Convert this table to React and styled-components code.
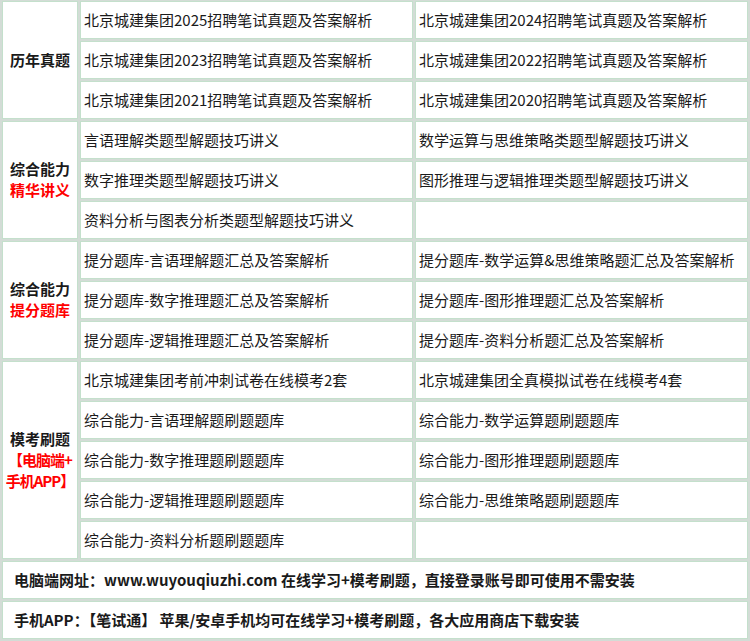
import React from 'react';
import styled, { createGlobalStyle } from 'styled-components';

const GlobalStyle = createGlobalStyle`
  body {
    margin: 0;
    background: #ffffff;
    font-family: "Noto Sans CJK SC", "Liberation Sans", sans-serif;
  }
`;

const Board = styled.div`
  width: 750px;
  box-sizing: border-box;
  display: grid;
  grid-template-columns: 76px 1fr 1fr;
  grid-auto-rows: 38px;
  gap: 2px;
  padding: 1px 2px 2px;
  background: #d3dcd6;
`;

const Cell = styled.div`
  box-sizing: border-box;
  background: #ffffff;
  border: 1px solid #c4e0cc;
  display: flex;
  align-items: center;
  padding: 0 3px 2px;
  font-size: 15px;
  color: #1a1a1a;
  white-space: nowrap;
  overflow: hidden;
`;

const Label = styled(Cell)`
  grid-row: span ${(props) => props.span};
  display: block;
  align-content: center;
  padding: 0 0 2px;
  font-weight: bold;
  text-align: center;
  line-height: 21px;
`;

const Red = styled.span`
  display: block;
  color: #ff0000;
  letter-spacing: ${(props) => (props.tight ? '-1px' : '0')};
`;

const Wide = styled(Cell)`
  grid-column: 1 / -1;
  padding: 0 11px 2px;
  font-weight: bold;
`;

const sections = [
  {
    title: <>历年真题</>,
    items: [
      '北京城建集团2025招聘笔试真题及答案解析',
      '北京城建集团2024招聘笔试真题及答案解析',
      '北京城建集团2023招聘笔试真题及答案解析',
      '北京城建集团2022招聘笔试真题及答案解析',
      '北京城建集团2021招聘笔试真题及答案解析',
      '北京城建集团2020招聘笔试真题及答案解析',
    ],
  },
  {
    title: (
      <>
        综合能力
        <Red>精华讲义</Red>
      </>
    ),
    items: [
      '言语理解类题型解题技巧讲义',
      '数学运算与思维策略类题型解题技巧讲义',
      '数字推理类题型解题技巧讲义',
      '图形推理与逻辑推理类题型解题技巧讲义',
      '资料分析与图表分析类题型解题技巧讲义',
      '',
    ],
  },
  {
    title: (
      <>
        综合能力
        <Red>提分题库</Red>
      </>
    ),
    items: [
      '提分题库-言语理解题汇总及答案解析',
      '提分题库-数学运算&思维策略题汇总及答案解析',
      '提分题库-数字推理题汇总及答案解析',
      '提分题库-图形推理题汇总及答案解析',
      '提分题库-逻辑推理题汇总及答案解析',
      '提分题库-资料分析题汇总及答案解析',
    ],
  },
  {
    title: (
      <>
        模考刷题
        <Red tight>【电脑端+</Red>
        <Red tight>手机APP】</Red>
      </>
    ),
    items: [
      '北京城建集团考前冲刺试卷在线模考2套',
      '北京城建集团全真模拟试卷在线模考4套',
      '综合能力-言语理解题刷题题库',
      '综合能力-数学运算题刷题题库',
      '综合能力-数字推理题刷题题库',
      '综合能力-图形推理题刷题题库',
      '综合能力-逻辑推理题刷题题库',
      '综合能力-思维策略题刷题题库',
      '综合能力-资料分析题刷题题库',
      '',
    ],
  },
];

export default function App() {
  return (
    <>
      <GlobalStyle />
      <Board>
        {sections.map((section, i) => {
          const rows = [];
          for (let r = 0; r < section.items.length / 2; r++) {
            if (r === 0) {
              rows.push(
                <Label key="label" span={section.items.length / 2}>
                  {section.title}
                </Label>
              );
            }
            rows.push(<Cell key={`a${r}`}>{section.items[r * 2]}</Cell>);
            rows.push(<Cell key={`b${r}`}>{section.items[r * 2 + 1]}</Cell>);
          }
          return <React.Fragment key={i}>{rows}</React.Fragment>;
        })}
        <Wide>电脑端网址：www.wuyouqiuzhi.com 在线学习+模考刷题，直接登录账号即可使用不需安装</Wide>
        <Wide>手机APP：【笔试通】 苹果/安卓手机均可在线学习+模考刷题，各大应用商店下载安装</Wide>
      </Board>
    </>
  );
}
